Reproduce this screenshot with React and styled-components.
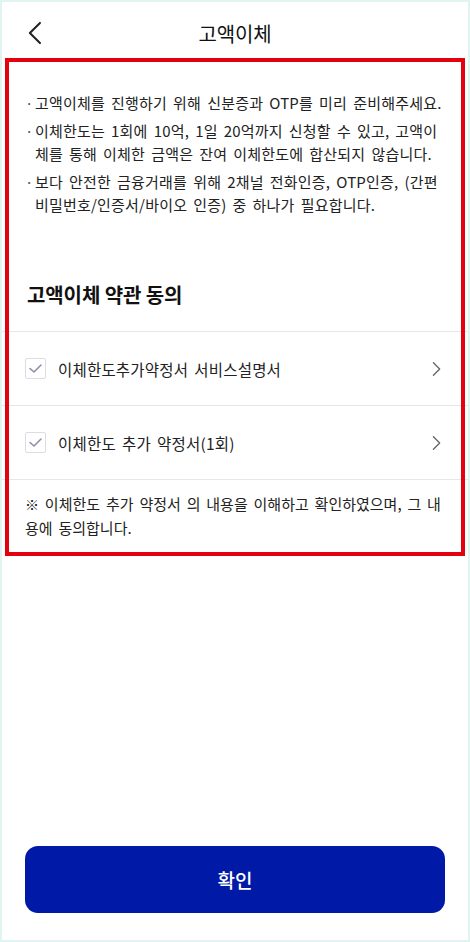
import React from "react";
import styled, { createGlobalStyle } from "styled-components";

const GlobalStyle = createGlobalStyle`
  html, body {
    margin: 0;
    padding: 0;
    background: #ffffff;
  }
  body {
    font-family: "Noto Sans CJK KR", "Noto Sans", sans-serif;
    color: #222;
    -webkit-font-smoothing: antialiased;
  }
  * { box-sizing: border-box; }
`;

const Page = styled.div`
  position: relative;
  width: 470px;
  height: 942px;
  border: 2px solid #e0f5f1;
  display: flex;
  flex-direction: column;
  background: #fff;
`;

const Header = styled.header`
  display: grid;
  grid-template-columns: 1fr auto 1fr;
  align-items: center;
  height: 62px;
  padding: 0 20px;
`;

const BackButton = styled.button`
  justify-self: start;
  border: 0;
  background: none;
  padding: 0;
  width: 24px;
  height: 28px;
  display: flex;
  align-items: center;
  justify-content: center;
`;

const Title = styled.h1`
  margin: 0;
  font-size: 20px;
  font-weight: 400;
  color: #111;
  letter-spacing: -0.2px;
`;

const bodyText = `
  font-size: 15px;
  line-height: 23px;
  color: #222;
  letter-spacing: 0.2px;
  word-spacing: 2.5px;
`;

const NoticeList = styled.ul`
  list-style: none;
  margin: 0;
  padding: 27px 0 0 23px;
  display: flex;
  flex-direction: column;
  gap: 5px;
`;

const NoticeItem = styled.li`
  position: relative;
  padding-left: 10px;
  ${bodyText}
  &::before {
    content: "·";
    position: absolute;
    left: 0;
    top: 0;
    color: #555;
  }
`;

const Line = styled.span`
  display: block;
  white-space: nowrap;
`;

const SectionTitle = styled.h2`
  margin: 0;
  padding: 64px 25px 22px;
  font-size: 20px;
  font-weight: 700;
  color: #111;
  letter-spacing: -0.1px;
`;

const TermsList = styled.div`
  display: flex;
  flex-direction: column;
  border-top: 1px solid #e4e7ec;
`;

const TermRow = styled.div`
  display: flex;
  align-items: center;
  height: 74px;
  padding: 0 26px 0 23px;
  border-bottom: 1px solid #e4e7ec;
`;

const CheckBox = styled.span`
  width: 21px;
  height: 21px;
  border: 1px solid #dcdde3;
  border-radius: 2px;
  display: flex;
  align-items: center;
  justify-content: center;
  flex-shrink: 0;
`;

const TermLabel = styled.span`
  flex: 1;
  margin-left: 12px;
  font-size: 15.5px;
  color: #222;
  letter-spacing: 0.2px;
  word-spacing: 2.5px;
`;

const Agreement = styled.p`
  margin: 0;
  padding: 12px 0 0 23px;
  ${bodyText}
  letter-spacing: 0;
`;

const RefMark = styled.span`
  font-size: 14px;
  font-weight: 700;
  color: #111;
`;

const Highlight = styled.div`
  position: absolute;
  left: 3px;
  top: 56px;
  width: 460px;
  height: 498px;
  border: 4px solid #e3000f;
  pointer-events: none;
`;

const Footer = styled.div`
  margin-top: auto;
  padding: 0 23px 27px;
`;

const ConfirmButton = styled.button`
  width: 100%;
  height: 67px;
  border: 0;
  border-radius: 13px;
  background: #0019a6;
  color: #fff;
  font-family: inherit;
  font-size: 19px;
  font-weight: 500;
`;

const Chevron = ({ dir = "right", size = 16, color = "#555", width = 1.6 }) => (
  <svg width={size * 0.6} height={size} viewBox="0 0 10 16" fill="none">
    <path
      d={dir === "left" ? "M9 1 L2 8 L9 15" : "M1.5 1.5 L8 8 L1.5 14.5"}
      stroke={color}
      strokeWidth={width}
      strokeLinecap="round"
      strokeLinejoin="round"
    />
  </svg>
);

const CheckMark = () => (
  <svg width="15" height="11" viewBox="0 0 15 11" fill="none">
    <path d="M2 5.5 L6 9 L13 2" stroke="#8c8aa8" strokeWidth="1.5" strokeLinecap="round" strokeLinejoin="round" />
  </svg>
);

// each notice is kept as its printed lines
const notices = [
  ["고액이체를 진행하기 위해 신분증과 OTP를 미리 준비해주세요."],
  [
    "이체한도는 1회에 10억, 1일 20억까지 신청할 수 있고, 고액이",
    "체를 통해 이체한 금액은 잔여 이체한도에 합산되지 않습니다.",
  ],
  [
    "보다 안전한 금융거래를 위해 2채널 전화인증, OTP인증, (간편",
    "비밀번호/인증서/바이오 인증) 중 하나가 필요합니다.",
  ],
];

const terms = ["이체한도추가약정서 서비스설명서", "이체한도 추가 약정서(1회)"];

export default function App() {
  return (
    <>
      <GlobalStyle />
      <Page>
        <Header>
          <BackButton aria-label="뒤로">
            <Chevron dir="left" size={24} color="#222" width={1.4} />
          </BackButton>
          <Title>고액이체</Title>
          <span />
        </Header>
        <NoticeList>
          {notices.map((lines) => (
            <NoticeItem key={lines[0]}>
              {lines.map((l) => (
                <Line key={l}>{l}</Line>
              ))}
            </NoticeItem>
          ))}
        </NoticeList>
        <SectionTitle>고액이체 약관 동의</SectionTitle>
        <TermsList>
          {terms.map((t) => (
            <TermRow key={t}>
              <CheckBox>
                <CheckMark />
              </CheckBox>
              <TermLabel>{t}</TermLabel>
              <Chevron size={16} color="#666" width={1.4} />
            </TermRow>
          ))}
        </TermsList>
        <Agreement>
          <Line>
            <RefMark>※</RefMark> 이체한도 추가 약정서 의 내용을 이해하고 확인하였으며, 그 내
          </Line>
          <Line>용에 동의합니다.</Line>
        </Agreement>
        <Highlight />
        <Footer>
          <ConfirmButton>확인</ConfirmButton>
        </Footer>
      </Page>
    </>
  );
}
